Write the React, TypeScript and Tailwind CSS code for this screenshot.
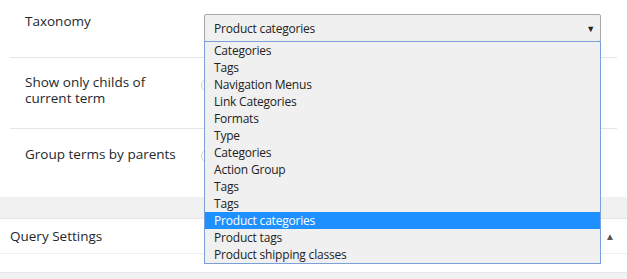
import React from 'react';

const items = [
  'Categories',
  'Tags',
  'Navigation Menus',
  'Link Categories',
  'Formats',
  'Type',
  'Categories',
  'Action Group',
  'Tags',
  'Tags',
  'Product categories',
  'Product tags',
  'Product shipping classes',
];

function Toggle() {
  return <div className="ml-[-3px] mt-[20px] w-[36px] h-[14px] rounded-full border border-[#d4d4d4] bg-white" />;
}

export default function App() {
  return (
    <div className="relative w-[627px] h-[279px] bg-white overflow-hidden font-['Open_Sans',sans-serif] text-[13.5px] text-[#23282d]">
      {/* Settings rows */}
      <div className="mx-[10px]">
        <div className="flex h-[58px] border-b border-[#e5e5e5]">
          <div className="w-[194px] pl-[15px] pt-[13px] leading-[16px]">Taxonomy</div>
          <div className="pt-[14px]">
            <div className="relative w-[397px] h-[28px] rounded-[2px] border border-[#a9a9a9] bg-[#f0f0f0] pl-[9px] pt-[5px] leading-[17px] text-[12px] tracking-[-0.2px] text-[#222]">
              Product categories
              <span className="absolute right-[5px] top-[5px] text-[9px] text-[#222]">▼</span>
            </div>
          </div>
        </div>
        <div className="flex h-[71px] border-b border-[#e5e5e5]">
          <div className="w-[194px] pl-[15px] pt-[16px] pr-[30px] leading-[16px]">Show only childs of current term</div>
          <Toggle />
        </div>
        <div className="flex h-[68px]">
          <div className="w-[194px] pl-[15px] pt-[17px] leading-[16px]">Group terms by parents</div>
          <Toggle />
        </div>
      </div>

      <div className="h-[21px] bg-[#f1f1f1]" />

      {/* Query Settings panel */}
      <div className="border-t border-[#e5e5e5] bg-white">
        <div className="flex items-center justify-between h-[35px] pl-[10px] pr-[12px] border-b border-[#eeeeee]">
          <span className="text-[13.5px] text-[#23282d]">Query Settings</span>
          <span className="text-[10px] text-[#555]">▲</span>
        </div>
        <div className="h-[18px]" />
      </div>
      <div className="h-[10px] bg-[#f1f1f1] border-t border-[#e8e8e8]" />

      {/* Open select list */}
      <div className="absolute left-[204px] top-[41px] w-[397px] border border-[#7b9fd8] bg-[#f0f0f0] text-[12px] tracking-[-0.2px] text-[#222]">
        {items.map((it, i) => (
          <div
            key={i}
            className={
              'h-[17px] pl-[9px] leading-[17px] ' +
              (i === 10 ? 'bg-[#1e90ff] text-white' : '')
            }
          >
            {it}
          </div>
        ))}
      </div>
    </div>
  );
}
